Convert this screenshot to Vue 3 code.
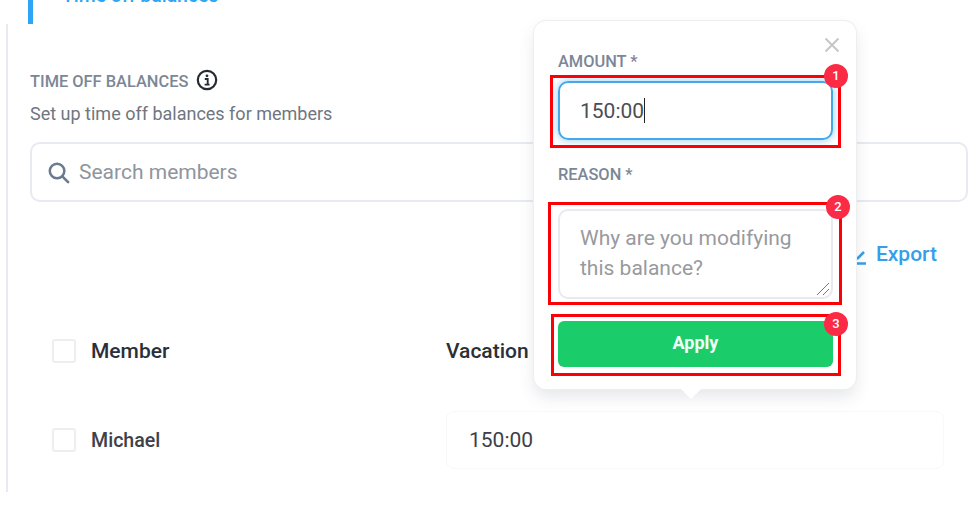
<script setup>
const rows = [{ name: "Michael", vacation: "150:00" }];

const marks = [
  { id: 1, cls: "mark-amount" },
  { id: 2, cls: "mark-reason" },
  { id: 3, cls: "mark-apply" },
];
</script>

<template>
  <div class="page">
    <div class="tab"><span class="tab-text">Time off balances</span></div>

    <section class="content">
      <div class="title-row">
        <h2 class="title">TIME OFF BALANCES</h2>
        <svg class="info-icon" viewBox="0 0 22 22" aria-hidden="true">
          <circle cx="11" cy="11" r="9.2" fill="none" stroke="currentColor" stroke-width="2.2" />
          <circle cx="11" cy="6.8" r="1.4" fill="currentColor" />
          <path d="M8.8 10h2.9v5.2M8.6 15.6h5" fill="none" stroke="currentColor" stroke-width="1.9" />
        </svg>
      </div>
      <p class="subtitle">Set up time off balances for members</p>

      <div class="search">
        <svg class="search-icon" viewBox="0 0 24 24" aria-hidden="true">
          <circle cx="10.5" cy="10.5" r="7.6" fill="none" stroke="currentColor" stroke-width="2.6" />
          <path d="M16 16l6 6" fill="none" stroke="currentColor" stroke-width="2.8" stroke-linecap="round" />
        </svg>
        <span class="search-text">Search members</span>
      </div>

      <div class="actions">
        <a class="export">
          <svg class="export-icon" viewBox="0 0 22 22" aria-hidden="true">
            <path d="M3 20.5h17M11 16l7-7" fill="none" stroke="currentColor" stroke-width="2.6" />
          </svg>
          Export
        </a>
      </div>

      <div class="table-head">
        <div class="cell-member">
          <span class="check"></span>
          <span class="head-label">Member</span>
        </div>
        <div class="cell-vacation head-label">Vacation</div>
      </div>

      <div v-for="row in rows" :key="row.name" class="table-row">
        <div class="cell-member">
          <span class="check"></span>
          <span class="row-name">{{ row.name }}</span>
        </div>
        <div class="cell-vacation value-box">{{ row.vacation }}</div>
      </div>
    </section>

    <!-- popover over the vacation cell -->
    <div class="popover">
      <svg class="close" viewBox="0 0 16 16" aria-hidden="true">
        <path d="M1.5 1.5l13 13M14.5 1.5l-13 13" fill="none" stroke="currentColor" stroke-width="2" />
      </svg>
      <label class="field-label">AMOUNT *</label>
      <div class="amount-input">150:00<span class="caret"></span></div>
      <label class="field-label reason-label">REASON *</label>
      <div class="reason-input">
        Why are you modifying this balance?
        <svg class="resize-grip" viewBox="0 0 14 14" aria-hidden="true">
          <path d="M1 13L13 1M7 13l6-6" fill="none" stroke="currentColor" stroke-width="1" />
        </svg>
      </div>
      <button class="apply" type="button">Apply</button>
      <span class="arrow"></span>
    </div>

    <!-- annotation boxes drawn on the screenshot -->
    <div v-for="m in marks" :key="m.id" class="mark" :class="m.cls">
      <span class="badge">{{ m.id }}</span>
    </div>
  </div>
</template>

<style>
html,
body {
  margin: 0;
  background: #fff;
}
</style>

<style scoped>
.page {
  position: relative;
  width: 980px;
  height: 508px;
  overflow: hidden;
  background: #fff;
  font-family: Roboto, "Liberation Sans", sans-serif;
  color: #2b2f38;
}

.tab {
  height: 24px;
  margin-left: 28px;
  padding-left: 29px;
  border-left: 5px solid #2ea6f5;
  box-sizing: border-box;
  overflow: hidden;
}

.tab-text {
  display: block;
  margin-top: -16px;
  line-height: 24px;
  font-size: 19.4px;
  font-weight: 500;
  color: #2ea6f5;
}

.content {
  height: 468px;
  margin-left: 6px;
  padding-left: 22px;
  border-left: 2px solid #e8eaf2;
  box-sizing: border-box;
}

.title-row {
  display: flex;
  align-items: center;
  gap: 8px;
  height: 24px;
  padding-top: 46px;
}

.title {
  margin: 0;
  font-size: 16.4px;
  font-weight: 500;
  line-height: 24px;
  color: #7b8797;
}

.info-icon {
  width: 22px;
  height: 22px;
  margin-top: -5px;
  color: #262a33;
}

.subtitle {
  margin: 8px 0 0;
  font-size: 18px;
  line-height: 24px;
  color: #6f7681;
}

.search {
  display: flex;
  align-items: center;
  width: 938px;
  height: 60px;
  margin-top: 16px;
  padding-left: 15px;
  box-sizing: border-box;
  border: 2px solid #e8eaf2;
  border-radius: 10px;
}

.search-icon {
  width: 23px;
  height: 23px;
  color: #6a7a90;
}

.search-text {
  margin-left: 9px;
  font-size: 21px;
  color: #8f959d;
}

.actions {
  display: flex;
  justify-content: flex-end;
  width: 907px;
  margin-top: 38px;
}

.export {
  display: flex;
  align-items: center;
  gap: 8px;
  font-size: 21px;
  font-weight: 500;
  line-height: 28px;
  color: #369fe8;
}

.export-icon {
  width: 22px;
  height: 22px;
}

.table-head,
.table-row {
  display: flex;
  align-items: center;
  padding-left: 22px;
}

.table-head {
  height: 60px;
  margin-top: 53px;
}

.table-row {
  height: 58px;
  margin-top: 30px;
}

.cell-member {
  display: flex;
  align-items: center;
  gap: 15px;
  width: 394px;
}

.check {
  width: 24px;
  height: 24px;
  box-sizing: border-box;
  border: 2px solid #eeeef1;
  border-radius: 3px;
}

.head-label {
  font-size: 21px;
  font-weight: 500;
  color: #2b2f38;
}

.row-name {
  font-size: 19.6px;
  font-weight: 500;
  color: #3d414b;
}

.value-box {
  display: flex;
  align-items: center;
  width: 498px;
  height: 58px;
  padding-left: 22px;
  box-sizing: border-box;
  border: 1px solid #f8f8fa;
  border-radius: 8px;
  font-size: 21px;
  color: #3a3f4a;
}

.popover {
  position: absolute;
  left: 534px;
  top: 21px;
  width: 322px;
  height: 368px;
  padding: 30px 24px 0;
  box-sizing: border-box;
  background: #fff;
  border-radius: 12px;
  box-shadow: 0 0 0 1px #eceef1, 0 8px 16px rgba(60, 66, 90, 0.13);
}

.close {
  position: absolute;
  top: 16px;
  right: 16px;
  width: 16px;
  height: 16px;
  color: #c4c6ca;
}

.field-label {
  display: block;
  font-size: 16.4px;
  font-weight: 500;
  line-height: 22px;
  color: #7b8797;
}

.amount-input {
  display: flex;
  align-items: center;
  width: 275px;
  height: 59px;
  margin-top: 8px;
  padding-left: 20px;
  box-sizing: border-box;
  border: 2px solid #44a8ea;
  border-radius: 10px;
  box-shadow: 0 0 8px rgba(68, 168, 234, 0.6);
  font-size: 21px;
  color: #4a4e56;
}

.caret {
  width: 1px;
  height: 25px;
  background: #222;
}

.reason-label {
  margin-top: 24px;
}

.reason-input {
  position: relative;
  width: 275px;
  height: 90px;
  margin-top: 23px;
  padding: 12px 20px;
  box-sizing: border-box;
  border: 2px solid #e8eaf0;
  border-radius: 10px;
  font-size: 21px;
  line-height: 30px;
  color: #989a9e;
}

.resize-grip {
  position: absolute;
  right: 1px;
  bottom: 1px;
  width: 14px;
  height: 14px;
  color: #777;
}

.apply {
  display: block;
  width: 275px;
  height: 46px;
  margin-top: 22px;
  padding: 0 0 3px;
  border: 0;
  border-radius: 6px;
  background: #1bcc6b;
  color: #f2fff7;
  font-family: inherit;
  font-size: 18px;
  font-weight: 700;
}

.arrow {
  position: absolute;
  left: 147px;
  bottom: -10px;
  width: 0;
  height: 0;
  border-left: 10px solid transparent;
  border-right: 10px solid transparent;
  border-top: 10px solid #fff;
}

.mark {
  position: absolute;
  box-sizing: border-box;
  border: 3px solid #fb0007;
}

.mark-amount {
  left: 550px;
  top: 75px;
  width: 291px;
  height: 73px;
}

.mark-reason {
  left: 548px;
  top: 202px;
  width: 294px;
  height: 103px;
}

.mark-apply {
  left: 551px;
  top: 314px;
  width: 290px;
  height: 62px;
}

.badge {
  position: absolute;
  top: -14px;
  right: -10px;
  width: 24px;
  height: 24px;
  border-radius: 50%;
  background: #fb2a45;
  color: #fff;
  font-size: 13px;
  font-weight: 500;
  line-height: 24px;
  text-align: center;
}

.mark-reason .badge {
  top: -10px;
  right: -11px;
}

.mark-apply .badge {
  top: -5px;
  right: -10px;
}
</style>
